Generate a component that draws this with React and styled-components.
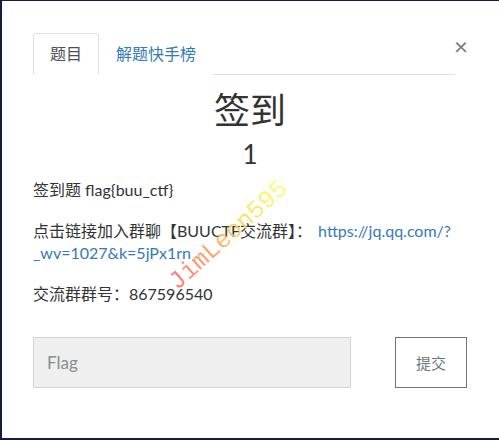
import React from "react";
import styled, { createGlobalStyle } from "styled-components";

const GlobalStyle = createGlobalStyle`
  html, body {
    margin: 0;
    padding: 0;
    background: #111d44;
  }
  body {
    font-family: Lato, "Noto Sans CJK SC", sans-serif;
    color: #333;
  }
`;

const Modal = styled.div`
  position: relative;
  box-sizing: border-box;
  width: 497px;
  height: 437px;
  margin: 1px 0 0 2px;
  padding: 32px 32px 0 31px;
  background: #fff;
`;

const Header = styled.div`
  display: flex;
  align-items: flex-start;
`;

const Tabs = styled.div`
  flex: 1;
  display: flex;
  border-bottom: 1px solid #dee2e6;
`;

const Tab = styled.div`
  padding: 8px 16px;
  margin-bottom: -1px;
  font-size: 16px;
  line-height: 24px;
  border: 1px solid ${(p) => (p.$active ? "#dee2e6" : "transparent")};
  border-bottom-color: ${(p) => (p.$active ? "#fff" : "transparent")};
  border-radius: 3px 3px 0 0;
  color: ${(p) => (p.$active ? "#495057" : "#337ab7")};
  background: #fff;
`;

const Close = styled.div`
  width: 13px;
  margin-top: 1px;
  font-size: 24px;
  line-height: 24px;
  font-weight: 400;
  color: #7a7a7a;
  text-align: right;
`;

const Title = styled.div`
  margin-top: 15px;
  text-align: center;
  font-size: 36px;
  line-height: 40px;
  color: #333;
`;

const Score = styled.div`
  margin-top: 9px;
  text-align: center;
  font-size: 26px;
  line-height: 30px;
`;

const Body = styled.div`
  margin-top: 10px;
  font-size: 16px;
  line-height: 22px;
`;

const Para = styled.p`
  margin: 0 0 19px;
`;

const Link = styled.a`
  margin-left: 6px;
  color: #337ab7;
  text-decoration: none;
`;

const Form = styled.div`
  display: flex;
  align-items: flex-start;
  margin-top: 32px;
`;

const FlagInput = styled.input`
  box-sizing: border-box;
  width: 318px;
  height: 51px;
  padding: 0 13px;
  border: 1px solid #ced4da;
  background: #efefef;
  font-family: Lato, "Noto Sans CJK SC", sans-serif;
  font-size: 17px;
  color: #495057;
  outline: none;

  &::placeholder {
    color: #878c92;
  }
`;

const Submit = styled.button`
  box-sizing: border-box;
  margin-left: auto;
  width: 72px;
  height: 51px;
  border: 1px solid #6c757d;
  border-radius: 0;
  background: #fff;
  color: #6c757d;
  font-family: Lato, "Noto Sans CJK SC", sans-serif;
  font-size: 15px;
`;

const Watermark = styled.div`
  position: absolute;
  left: 152px;
  top: 222px;
  transform: rotate(-42deg);
  font-family: "Liberation Mono", monospace;
  font-size: 25px;
  line-height: 26px;
  white-space: nowrap;
  background: linear-gradient(90deg, #ff6b6b 0%, #ff9d5c 35%, #ffd255 60%, #ffff66 100%);
  -webkit-background-clip: text;
  background-clip: text;
  color: transparent;
  opacity: 0.9;
  pointer-events: none;
`;

const App = () => {
  return (
    <>
      <GlobalStyle />
      <Modal>
        <Header>
          <Tabs>
            <Tab $active>题目</Tab>
            <Tab>解题快手榜</Tab>
          </Tabs>
          <Close>×</Close>
        </Header>
        <Title>签到</Title>
        <Score>1</Score>
        <Body>
          <Para>签到题 flag{"{buu_ctf}"}</Para>
          <Para>
            点击链接加入群聊【BUUCTF交流群】：
            <Link href="#">
              https://jq.qq.com/?<wbr />_wv=1027&amp;k=5jPx1rn
            </Link>
          </Para>
          <Para>交流群群号：867596540</Para>
        </Body>
        <Form>
          <FlagInput placeholder="Flag" />
          <Submit>提交</Submit>
        </Form>
        <Watermark>JimLeon595</Watermark>
      </Modal>
    </>
  );
};

export default App;
